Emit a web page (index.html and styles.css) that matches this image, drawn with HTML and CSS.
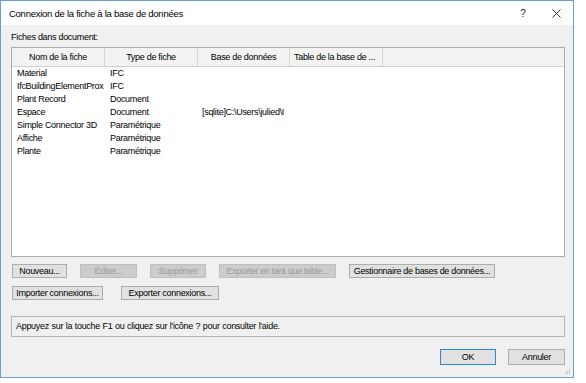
FILE: index.html
```html
<!DOCTYPE html>
<html lang="fr">
<head>
<meta charset="utf-8">
<title>Connexion de la fiche à la base de données</title>
<link rel="stylesheet" href="styles.css">
</head>
<body>
<div class="dialog">
  <div class="titlebar">
    <span class="title">Connexion de la fiche à la base de données</span>
    <span class="tb-help">?</span>
    <span class="tb-close">
      <svg width="9" height="9" viewBox="0 0 9 9"><path d="M0.5 0.5 L8.5 8.5 M8.5 0.5 L0.5 8.5" stroke="#222" stroke-width="0.9" fill="none"/></svg>
    </span>
  </div>
  <div class="content">
    <div class="label">Fiches dans document:</div>
    <div class="listbox">
      <div class="lv-header">
        <div class="hcol c1">Nom de la fiche</div>
        <div class="hcol c2">Type de fiche</div>
        <div class="hcol c3">Base de données</div>
        <div class="hcol c4 left">Table de la base de ...</div>
      </div>
      <div class="lv-body">
        <div class="lv-row"><span class="cell c1">Material</span><span class="cell c2">IFC</span></div>
        <div class="lv-row"><span class="cell c1">IfcBuildingElementProx</span><span class="cell c2">IFC</span></div>
        <div class="lv-row"><span class="cell c1">Plant Record</span><span class="cell c2">Document</span></div>
        <div class="lv-row"><span class="cell c1">Espace</span><span class="cell c2">Document</span><span class="cell c3 tight">[sqlite]C:\Users\julied\I</span></div>
        <div class="lv-row"><span class="cell c1">Simple Connector 3D</span><span class="cell c2">Paramétrique</span></div>
        <div class="lv-row"><span class="cell c1">Affiche</span><span class="cell c2">Paramétrique</span></div>
        <div class="lv-row"><span class="cell c1">Plante</span><span class="cell c2">Paramétrique</span></div>
      </div>
    </div>
    <div class="btn-row row1">
      <button class="btn w-nouveau">Nouveau...</button>
      <button class="btn disabled w-editer">Éditer...</button>
      <button class="btn disabled w-suppr">Supprimer</button>
      <button class="btn disabled w-export-table">Exporter en tant que table...</button>
      <button class="btn w-gest">Gestionnaire de bases de données...</button>
    </div>
    <div class="btn-row row2">
      <button class="btn w-import">Importer connexions...</button>
      <button class="btn w-export">Exporter connexions...</button>
    </div>
    <div class="helpbox">Appuyez sur la touche F1 ou cliquez sur l'icône ? pour consulter l'aide.</div>
    <div class="footer">
      <button class="btn big default">OK</button>
      <button class="btn big">Annuler</button>
    </div>
  </div>
  <svg class="grip" width="7" height="7" viewBox="0 0 7 7">
    <rect x="5" y="1" width="1" height="1" fill="#a8a8a8"/>
    <rect x="3" y="3" width="1" height="1" fill="#a8a8a8"/>
    <rect x="5" y="3" width="1" height="1" fill="#a8a8a8"/>
    <rect x="1" y="5" width="1" height="1" fill="#a8a8a8"/>
    <rect x="3" y="5" width="1" height="1" fill="#a8a8a8"/>
    <rect x="5" y="5" width="1" height="1" fill="#a8a8a8"/>
  </svg>
</div>
</body>
</html>
```

FILE: styles.css
```css
* { box-sizing: border-box; }

body {
  margin: 0;
  background: #ffffff;
  font-family: "Liberation Sans", Arial, sans-serif;
  font-size: 9px;
  letter-spacing: -0.3px;
  color: #000;
}

.dialog {
  position: relative;
  width: 574px;
  height: 378px;
  border: 1px solid #6a9fd6;
  background: #f0f0f0;
  display: flex;
  flex-direction: column;
}

.titlebar {
  height: 24px;
  background: #ffffff;
  display: flex;
  align-items: center;
}

.title {
  flex: 1;
  padding-left: 8px;
  padding-top: 1px;
  font-size: 9.5px;
  letter-spacing: -0.26px;
}

.tb-help {
  width: 34px;
  text-align: center;
  font-size: 10px;
  letter-spacing: 0;
  color: #222;
}

.tb-close {
  width: 33px;
  height: 24px;
  display: flex;
  align-items: center;
  justify-content: center;
  padding-top: 1px;
}

.content {
  flex: 1;
  display: flex;
  flex-direction: column;
  padding: 7px 8px 0 10px;
}

.label {
  line-height: 11px;
  height: 11px;
  margin-bottom: 4px;
}

.listbox {
  height: 210px;
  border: 1px solid #adadad;
  background: #ffffff;
  overflow: hidden;
}

.lv-header {
  display: flex;
  height: 19px;
  background: #f3f3f3;
  border-bottom: 1px solid #cfcfcf;
}

.hcol {
  height: 18px;
  line-height: 17px;
  padding-top: 1px;
  text-align: center;
  border-right: 1px solid #d6d6d6;
  white-space: nowrap;
  overflow: hidden;
}

.hcol.left {
  text-align: left;
  padding-left: 4px;
}

.c1 { width: 93px; }
.c2 { width: 93px; }
.c3 { width: 92px; }
.c4 { width: 93px; }

.lv-row {
  display: flex;
  height: 13px;
  line-height: 13px;
}

.cell {
  padding-left: 5px;
  white-space: nowrap;
  overflow: hidden;
}

.cell.tight { padding-left: 4px; }

.btn-row {
  display: flex;
  margin-left: 1px;
}

.row1 {
  margin-top: 7px;
  gap: 13px;
}

.row2 {
  margin-top: 8px;
  gap: 18px;
}

.btn {
  font-family: inherit;
  font-size: 9px;
  letter-spacing: -0.3px;
  height: 14px;
  line-height: 12px;
  padding: 0;
  margin: 0;
  border: 1px solid #adadad;
  background: #e1e1e1;
  color: #000;
  text-align: center;
  white-space: nowrap;
}

.btn.disabled {
  background: #cccccc;
  border-color: #bfbfbf;
  color: #9a9a9a;
}

.w-nouveau { width: 55px; }
.w-editer { width: 57px; }
.w-suppr { width: 56px; }
.w-export-table { width: 117px; }
.w-gest { width: 146px; }
.w-import { width: 91px; }
.w-export { width: 98px; }

.helpbox {
  margin-top: 16px;
  height: 21px;
  border: 1px solid #b4b4b4;
  line-height: 19px;
  padding-left: 4px;
  word-spacing: 0.4px;
  white-space: nowrap;
}

.footer {
  display: flex;
  justify-content: flex-end;
  gap: 12px;
  margin-top: 12px;
}

.btn.big {
  width: 57px;
  height: 16px;
  line-height: 14px;
}

.btn.default {
  width: 56px;
  border-color: #2f86d8;
}

.grip {
  position: absolute;
  right: 2px;
  bottom: 2px;
}
```
